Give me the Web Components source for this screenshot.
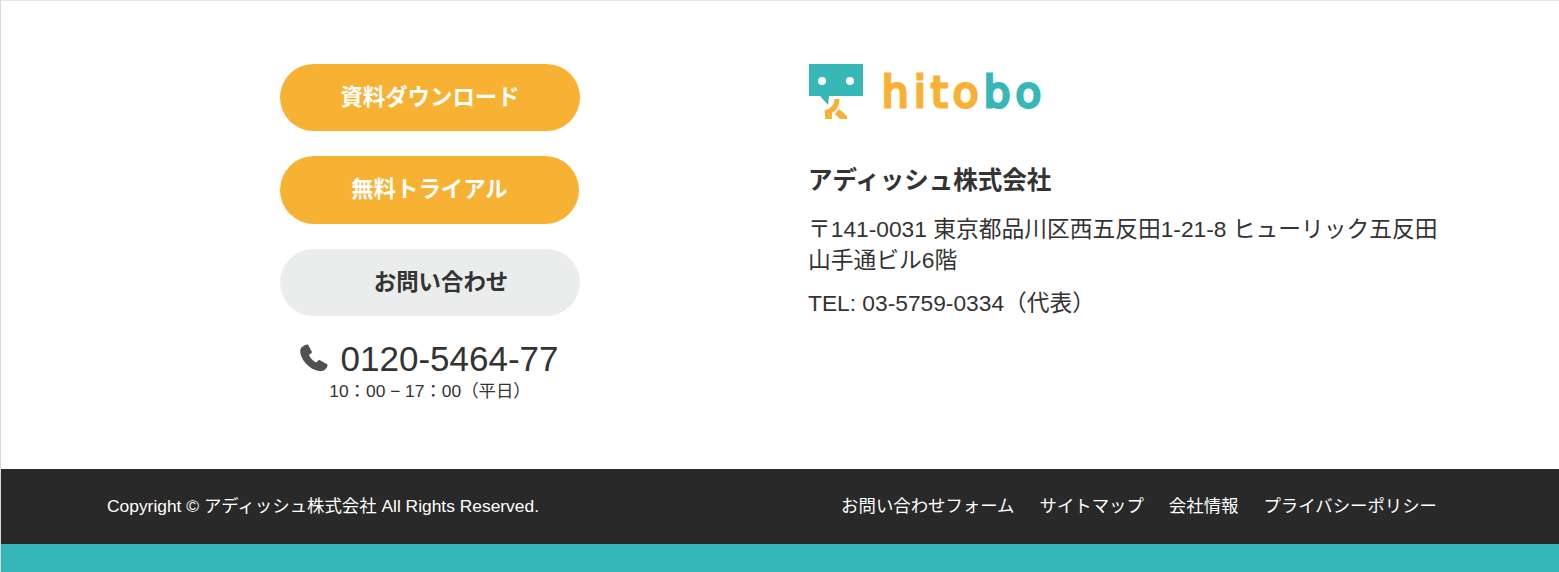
<!DOCTYPE html>
<html lang="ja">
<head>
<meta charset="utf-8">
<title>hitobo</title>
<style>
  html, body { margin: 0; padding: 0; }
  body {
    font-family: "Liberation Sans", "Noto Sans CJK JP", sans-serif;
    color: #333;
    background: #fff;
  }
</style>
</head>
<body>
<site-footer>
  <contact-column slot="left">
    <cta-button kind="primary" wide>資料ダウンロード</cta-button>
    <cta-button kind="primary" tall>無料トライアル</cta-button>
    <cta-button kind="muted">お問い合わせ</cta-button>
    <phone-block number="0120-5464-77" hours="10：00 − 17：00（平日）"></phone-block>
  </contact-column>
  <company-info slot="right"></company-info>
  <footer-bar slot="bar"></footer-bar>
</site-footer>

<script>
class SiteFooter extends HTMLElement {
    constructor() {
        super();
        this.attachShadow({ mode: 'open' }).innerHTML = `
            <style>
                :host { display: block; height: 572px; box-sizing: border-box; border-left: 1px solid #d9d9d9; }
                .main { display: flex; height: 469px; box-sizing: border-box; border-top: 1px solid #e6e6e6; padding: 63px 0 0 279px; }
                .left { width: 300px; margin-right: 229px; }
                .right { flex: 1; }
                .teal { height: 28px; background: #36b6b6; }
            </style>
            <div class="main">
                <div class="left"><slot name="left"></slot></div>
                <div class="right"><slot name="right"></slot></div>
            </div>
            <slot name="bar"></slot>
            <div class="teal"></div>
        `;
    }
}

class ContactColumn extends HTMLElement {
    constructor() {
        super();
        this.attachShadow({ mode: 'open' }).innerHTML = `
            <style>
                :host { display: flex; flex-direction: column; gap: 25px; }
            </style>
            <slot></slot>
        `;
    }
}

class CtaButton extends HTMLElement {
    constructor() {
        super();
        this.attachShadow({ mode: 'open' }).innerHTML = `
            <style>
                :host {
                    display: flex; align-items: center; justify-content: center;
                    height: 67px; border-radius: 34px; box-sizing: border-box;
                    padding-bottom: 6px;
                    font-size: 22.4px; font-weight: 700;
                    background: #f7b133; color: #fff;
                }
                :host([tall]) { height: 68px; width: 299px; }
                :host([kind="muted"]) { background: #ebecec; color: #333; padding-left: 22px; }
            </style>
            <slot></slot>
        `;
    }
}

class PhoneBlock extends HTMLElement {
    constructor() {
        super();
        const number = this.getAttribute('number');
        const hours = this.getAttribute('hours');
        this.attachShadow({ mode: 'open' }).innerHTML = `
            <style>
                :host { display: block; margin-top: -2px; text-align: center; color: #333; }
                .num { display: flex; align-items: center; justify-content: center; gap: 12px; font-size: 35px; line-height: 40px; height: 40px; padding-right: 2px; }
                svg { width: 29px; height: 28px; fill: #505050; margin-top: -3px; }
                .hours { font-size: 17.4px; line-height: 22px; margin-top: 1px; }
            </style>
            <div class="num">
                <svg viewBox="0 0 29 28"><path d="M1 4C3 2 6 0 8 .5L12 8C12 9 10 10 9 11 10 14 13 17 16 18.500 17 18 18 16 19.500 16L27.500 20.500C28 23 25 26.500 22 27 12 28 1 17 .3 8 .2 6 .5 5 1 4Z"/></svg>
                <span>${number}</span>
            </div>
            <div class="hours">${hours}</div>
        `;
    }
}

class HitoboLogo extends HTMLElement {
    constructor() {
        super();
        this.attachShadow({ mode: 'open' }).innerHTML = `
            <style>
                :host { display: flex; align-items: flex-start; height: 56px; }
                svg { width: 54px; height: 56px; display: block; }
                .word {
                    margin-left: 19px; margin-top: 1px;
                    font-family: "DejaVu Sans", sans-serif; font-weight: 400;
                    font-size: 42px; line-height: 56px; color: #f8b133;
                    letter-spacing: 5.3px;
                    -webkit-text-stroke: 3px #f8b133;
                }
                .word b { font-weight: 400; color: #38b7b8; -webkit-text-stroke: 3px #38b7b8; }
            </style>
            <svg viewBox="0 0 54 56">
                <path fill="#38b7b8" d="M0 0H54V32H20L19 41 11 32H0Z"/>
                <circle cx="13" cy="17" r="4" fill="#fff"/>
                <circle cx="41" cy="17" r="4" fill="#fff"/>
                <path fill="none" stroke="#f8b133" stroke-width="5" d="M28 35C28 43 24 47 16 49"/>
                <path fill="#f8b133" d="M16 47H23V55H16Z M30 45 38 52V55H31L26 50Z"/>
            </svg>
            <span class="word">hito<b>bo</b></span>
        `;
    }
}
customElements.define('hitobo-logo', HitoboLogo);

class CompanyInfo extends HTMLElement {
    constructor() {
        super();
        this.attachShadow({ mode: 'open' }).innerHTML = `
            <style>
                :host { display: block; width: 660px; color: #333; margin-left: -1px; }
                hitobo-logo { margin-left: 1px; }
                h2 { font-size: 24.5px; line-height: 34px; font-weight: 700; margin: 44px 0 0; }
                p { font-size: 22.75px; line-height: 31px; margin: 0; }
                .addr { margin-top: 16px; }
                .tel { margin-top: 12px; }
            </style>
            <hitobo-logo></hitobo-logo>
            <h2>アディッシュ株式会社</h2>
            <p class="addr">〒141-0031 東京都品川区西五反田1-21-8 ヒューリック五反田<br>山手通ビル6階</p>
            <p class="tel">TEL: 03-5759-0334（代表）</p>
        `;
    }
}

class FooterBar extends HTMLElement {
    constructor() {
        super();
        const links = ['お問い合わせフォーム', 'サイトマップ', '会社情報', 'プライバシーポリシー'];
        this.attachShadow({ mode: 'open' }).innerHTML = `
            <style>
                :host {
                    display: flex; align-items: center; justify-content: space-between;
                    height: 75px; box-sizing: border-box; padding: 0 122px 5px 106px;
                    background: #292929; color: #fff; font-size: 17.4px;
                }
                nav { display: flex; gap: 25px; }
                a { color: inherit; text-decoration: none; }
            </style>
            <span>Copyright © アディッシュ株式会社 All Rights Reserved.</span>
            <nav>${links.map(l => `<a href="#">${l}</a>`).join('')}</nav>
        `;
    }
}

customElements.define('site-footer', SiteFooter);
customElements.define('contact-column', ContactColumn);
customElements.define('cta-button', CtaButton);
customElements.define('phone-block', PhoneBlock);
customElements.define('company-info', CompanyInfo);
customElements.define('footer-bar', FooterBar);
</script>
</body>
</html>
